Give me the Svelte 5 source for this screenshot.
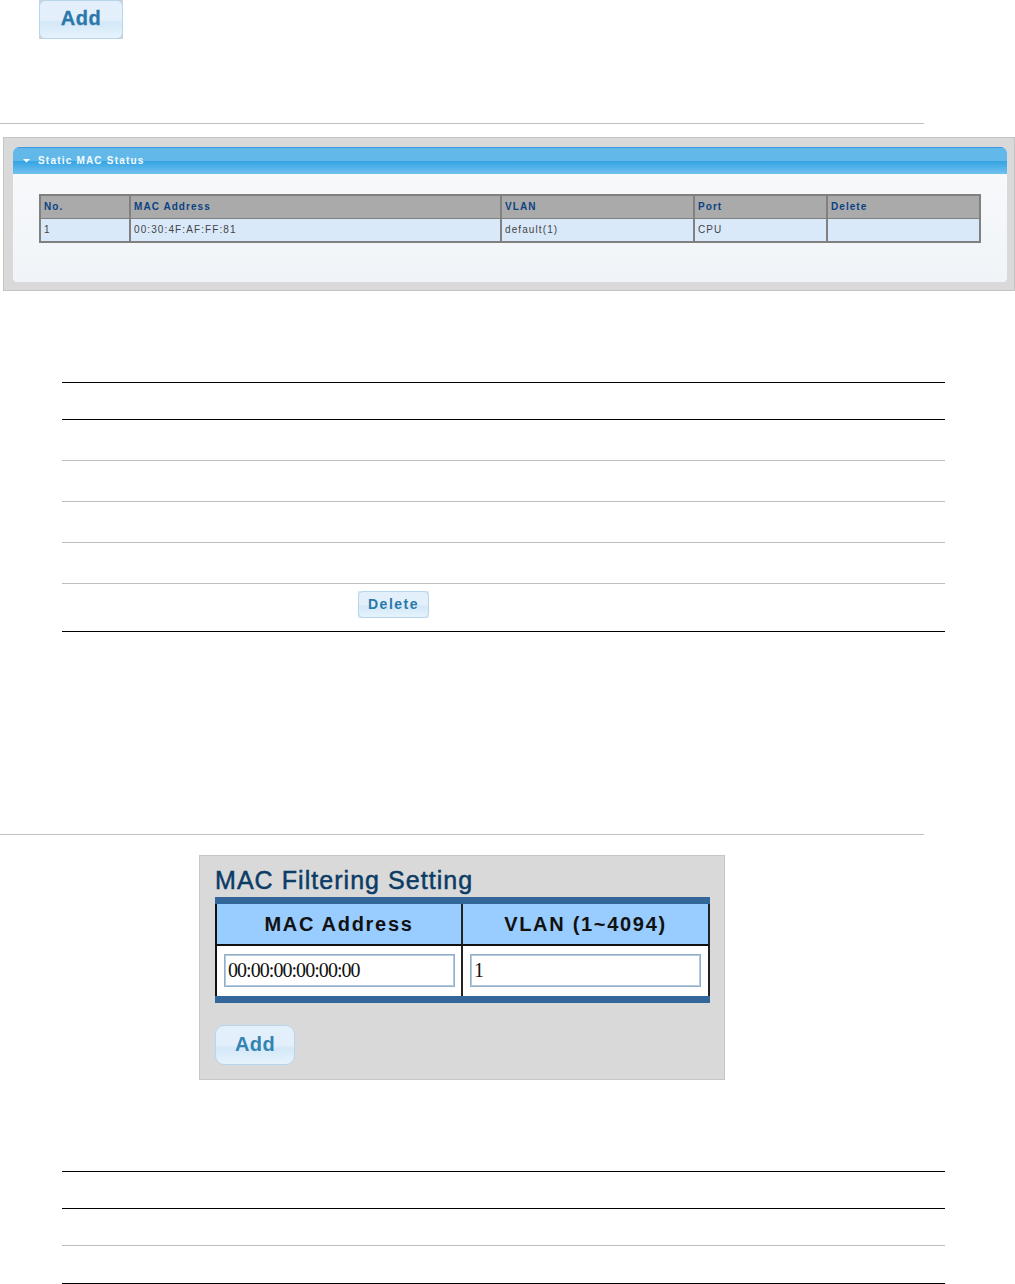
<script>
  const statusCols = [
    { head: 'No.', cell: '1' },
    { head: 'MAC Address', cell: '00:30:4F:AF:FF:81' },
    { head: 'VLAN', cell: 'default(1)' },
    { head: 'Port', cell: 'CPU' },
    { head: 'Delete', cell: '' }
  ];
</script>

<div class="page">
  <div class="top-row">
    <div class="corner big-c"><button class="shot-btn big">Add</button></div>
  </div>
  <div class="rule r1"></div>

  <div class="status-shot">
    <div class="status-inner">
      <div class="status-bar">
        <svg class="caret" width="8" height="4" viewBox="0 0 8 4"><path d="M0 0h7L3.5 3.5z" fill="#fff" /></svg>
        <span>Static MAC Status</span>
      </div>
      <div class="status-body">
        <div class="status-table">
          {#each statusCols as c}
            <div class="sh">{c.head}</div>
          {/each}
          {#each statusCols as c}
            <div class="sc">{c.cell}</div>
          {/each}
        </div>
      </div>
    </div>
  </div>

  <div class="doc-table t1">
    <div class="row black h37"></div>
    <div class="row black h41"></div>
    <div class="row grey h41"></div>
    <div class="row grey h41"></div>
    <div class="row grey h41"></div>
    <div class="row grey last">
      <div class="corner small-c"><button class="shot-btn small">Delete</button></div>
    </div>
  </div>

  <div class="rule r2"></div>

  <div class="filter-shot">
    <h2>MAC Filtering Setting</h2>
    <div class="filter-table">
      <div class="fh first">MAC Address</div>
      <div class="fh">VLAN (1~4094)</div>
      <div class="fc first"><input value="00:00:00:00:00:00" /></div>
      <div class="fc"><input value="1" /></div>
    </div>
    <button class="shot-btn mid">Add</button>
  </div>

  <div class="doc-table t2">
    <div class="row black h37"></div>
    <div class="row black h37"></div>
    <div class="row grey h39"></div>
  </div>
</div>

<style>
  :global(body) { margin: 0; background: #fff; }
  .page { width: 1015px; height: 1284px; overflow: hidden; font-family: "Liberation Sans", Arial, sans-serif; }

  .top-row { padding-left: 39px; height: 39px; }
  .corner { box-sizing: border-box; }
  .big-c { width: 84px; height: 39px; background: #ccd3d8; }
  .small-c { width: 71px; height: 27px; margin-left: 296px; background: #d6e9f8; }
  .shot-btn {
    display: block; box-sizing: border-box; margin: 0; padding: 0 0 2px;
    border: 1px solid #b6d6ee;
    background: linear-gradient(#e3f0fb 0 50%, #d4e8f8 58%, #e6f3fc);
    color: #2a78aa; font-family: "Liberation Sans", Arial, sans-serif; font-weight: 700;
    text-align: center; width: 100%; height: 100%;
  }
  .big { border-radius: 6px; font-size: 20px; letter-spacing: 0.6px; -webkit-text-stroke: 0.3px #2a78aa; }
  .small { border-radius: 5px; font-size: 14px; letter-spacing: 1.5px; }
  .mid { width: 80px; height: 40px; border-radius: 9px; font-size: 20px; letter-spacing: 0.4px; margin: 22px 0 0 15px; color: #3383b4; padding-bottom: 1px; }

  .rule { width: 924px; height: 1px; background: #c0c0c0; }
  .r1 { margin-top: 84px; }

  .status-shot {
    box-sizing: border-box; width: 1012px; height: 154px; margin: 13px 0 0 3px;
    padding: 9px 7px 8px 9px; background: #d9d9d9; border: 1px solid #c4c4c4;
  }
  .status-inner { height: 135px; border-radius: 6px 6px 4px 4px; overflow: hidden; background: linear-gradient(#f9fafc, #f0f4f8); }
  .status-bar {
    display: flex; align-items: center; gap: 7px; box-sizing: border-box; height: 27px; padding: 0 0 1px 10px;
    background: linear-gradient(#62b9e9 0 50%, #36a4e3 52%, #72c1ee);
    border-top: 1px solid #3a9ae0;
    color: #f4fbff; font-size: 10px; font-weight: 700; letter-spacing: 1.2px;
  }
  .caret { flex: none; }
  .status-body { padding: 20px 0 0 26px; }
  .status-table { display: grid; grid-template-columns: 90px 371px 193px 133px 153px; width: 942px; box-sizing: border-box; border-right: 2px solid #808080; }
  .sh {
    box-sizing: border-box; height: 25px; padding: 5px 0 0 3px; background: #aaa;
    border-top: 2px solid #808080; border-left: 2px solid #808080; border-bottom: 1px solid #808080;
    color: #0a4384; font-size: 10px; font-weight: 700; letter-spacing: 1.05px; white-space: nowrap;
  }
  .sc {
    box-sizing: border-box; height: 24px; padding: 5px 0 0 3px; background: #d9e9f9;
    border-left: 2px solid #808080; border-bottom: 2px solid #808080;
    color: #444; font-size: 10px; letter-spacing: 1.1px; white-space: nowrap;
  }

  .doc-table { width: 883px; margin-left: 62px; }
  .t1 { margin-top: 91px; }
  .t2 { margin-top: 91px; }
  .row { box-sizing: border-box; border-top: 1px solid; }
  .black { border-color: #000; }
  .grey { border-color: #bdbdbd; }
  .h37 { height: 37px; }
  .h39 { height: 39px; border-bottom: 1px solid #000; }
  .h41 { height: 41px; }
  .last { height: 49px; padding-top: 7px; border-bottom: 1px solid #000; }

  .r2 { margin-top: 202px; }

  .filter-shot {
    box-sizing: border-box; width: 526px; height: 225px; margin: 20px 0 0 199px;
    background: #d9d9d9; border: 1px solid #c6c6c6; padding-top: 9px;
  }
  h2 {
    margin: 0 0 2px 15px; font-size: 25px; line-height: 30px; font-weight: 400; color: #0b3c66;
    letter-spacing: 1.05px; -webkit-text-stroke: 0.5px #0b3c66; white-space: nowrap;
  }
  .filter-table {
    display: grid; grid-template-columns: 248px 247px; width: 495px; margin: 0 0 0 15px;
    border-top: 7px solid #336699; border-bottom: 7px solid #336699; box-sizing: border-box;
  }
  .fh {
    box-sizing: border-box; height: 42px; line-height: 41px; background: #99ccff; text-align: center;
    font-size: 20px; font-weight: 700; letter-spacing: 1.7px; color: #111; white-space: nowrap;
    border-right: 2px solid #222; border-bottom: 2px solid #111;
  }
  .fc {
    box-sizing: border-box; height: 50px; background: #fff; padding: 8px 0 0 7px;
    border-right: 2px solid #222;
  }
  .first { border-left: 2px solid #111; }
  input {
    display: block; box-sizing: border-box; width: 231px; height: 33px; margin: 0; padding: 0 0 0 3px;
    border: 1px solid #8fafcb; outline: 1px solid #b4c9dc; outline-offset: -2px; background: #fff;
    font-family: "Liberation Serif", serif; font-size: 20px; letter-spacing: -0.95px; color: #111;
  }
</style>
